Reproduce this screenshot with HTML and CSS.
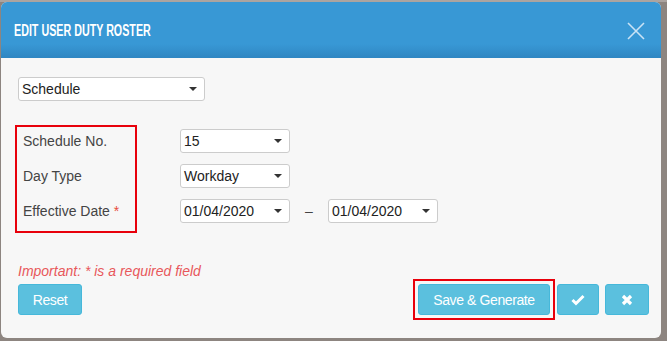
FILE: index.html
```html
<!DOCTYPE html>
<html lang="en">
<head>
    <meta charset="UTF-8">
    <title>Edit User Duty Roster</title>
    <link rel="stylesheet" href="styles.css">
</head>
<body>
    <div class="modal">
        <div class="modal-header">
            <h4 class="modal-title">EDIT USER DUTY ROSTER</h4>
            <svg class="close" width="18" height="18" viewBox="0 0 18 18">
                <path d="M1 1 L17 17 M17 1 L1 17" stroke="#c9e3f5" stroke-width="1.6" fill="none"/>
            </svg>
        </div>

        <div class="modal-body">
            <div class="select wide">Schedule<span class="caret"></span></div>

            <div class="fields">
                <div class="labels marked">
                    <div class="label">Schedule No.</div>
                    <div class="label">Day Type</div>
                    <div class="label">Effective Date <span class="req">*</span></div>
                </div>
                <div class="inputs">
                    <div class="row"><div class="select">15<span class="caret"></span></div></div>
                    <div class="row"><div class="select">Workday<span class="caret"></span></div></div>
                    <div class="row">
                        <div class="select">01/04/2020<span class="caret"></span></div>
                        <span class="dash">–</span>
                        <div class="select">01/04/2020<span class="caret"></span></div>
                    </div>
                </div>
            </div>

            <p class="note">Important: * is a required field</p>

            <div class="actions">
                <button class="btn reset">Reset</button>
                <div class="right">
                    <div class="marked-btn"><button class="btn save">Save &amp; Generate</button></div>
                    <button class="btn icon">
                        <svg width="14" height="12" viewBox="0 0 14 12"><path d="M1.5 6 L5 9.5 L12.5 2" stroke="#fff" stroke-width="3" fill="none"/></svg>
                    </button>
                    <button class="btn icon close-btn">
                        <svg width="12" height="12" viewBox="0 0 12 12"><path d="M2 2 L10 10 M10 2 L2 10" stroke="#fff" stroke-width="3.2" fill="none"/></svg>
                    </button>
                </div>
            </div>
        </div>
    </div>
</body>
</html>
```

FILE: styles.css
```css
body {
    margin: 0;
    background: #8d8580;
    font-family: "Liberation Sans", Arial, sans-serif;
    font-size: 14px;
    color: #333;
    width: 667px;
    height: 341px;
    overflow: hidden;
    border-top: 2px solid #aca4a0;
    box-sizing: border-box;
}
.modal {
    margin: 0 6px 0 1px;
    width: 660px;
    height: 336px;
    background: #f7f7f7;
    border-radius: 6px;
    overflow: hidden;
}
.modal-header {
    height: 56px;
    background: linear-gradient(to bottom, #3898d5 75%, #2f86c2 100%);
    display: flex;
    align-items: center;
    justify-content: space-between;
    padding: 0 16px 0 13px;
}
.modal-title {
    margin: 0;
    color: #fff;
    font-size: 16px;
    font-weight: bold;
    white-space: nowrap;
    transform: scaleX(0.67);
    transform-origin: left center;
    padding-top: 2px;
}
.close {
    margin-top: 2px;
}
.modal-body {
    padding: 19px 12px 0 17px;
}
.select {
    position: relative;
    box-sizing: border-box;
    width: 110px;
    height: 24px;
    background: #fff;
    border: 1px solid #ccc;
    border-radius: 3px;
    padding: 3px 0 0 3px;
    font-size: 14px;
    color: #222;
    line-height: 16px;
}
.select.wide {
    width: 187px;
}
.caret {
    position: absolute;
    right: 7px;
    top: 9px;
    border-left: 4px solid transparent;
    border-right: 4px solid transparent;
    border-top: 4px solid #333;
}
.fields {
    display: flex;
    margin-top: 24px;
    margin-left: -3px;
}
.marked {
    border: 2px solid #e8000b;
}
.labels {
    width: 112px;
    padding: 2px 0 8px 6px;
    display: flex;
    flex-direction: column;
    gap: 11px;
}
.label {
    height: 24px;
    line-height: 24px;
    color: #444;
    white-space: nowrap;
}
.req {
    color: #e84c3d;
}
.inputs {
    margin-left: 43px;
    padding-top: 4px;
    display: flex;
    flex-direction: column;
    gap: 11px;
}
.row {
    display: flex;
    align-items: center;
}
.dash {
    width: 38px;
    text-align: center;
    color: #444;
}
.note {
    margin: 30px 0 0 0;
    color: #e8575b;
    font-style: italic;
    font-size: 14px;
}
.actions {
    display: flex;
    justify-content: space-between;
    align-items: center;
    margin-top: 0;
}
.right {
    display: flex;
    align-items: center;
}
.btn {
    height: 31px;
    background: #5bc0de;
    border: 1px solid #46b8da;
    border-radius: 3px;
    color: #fff;
    font-family: "Liberation Sans", Arial, sans-serif;
    font-size: 14px;
    letter-spacing: -0.4px;
    white-space: nowrap;
    padding: 0 12px;
    cursor: pointer;
}
.reset {
    width: 64px;
}
.marked-btn {
    border: 2px solid #e8000b;
    padding: 3px;
}
.save {
    width: 132px;
}
.btn.icon {
    width: 42px;
    margin-left: 2px;
    display: flex;
    align-items: center;
    justify-content: center;
}
.btn.close-btn {
    width: 44px;
    margin-left: 6px;
}
```
